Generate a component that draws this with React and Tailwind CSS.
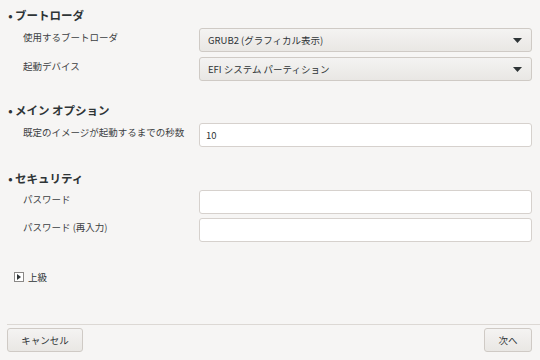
const font = { fontFamily: '"Noto Sans CJK JP", "Noto Sans", sans-serif' };

function Heading({ children, className = '' }) {
  return (
    <div className={'flex items-center h-[20px] pl-[6px] text-[11.5px] font-bold text-[#2e3436] ' + className}>
      <span className="w-[9px] text-center">•</span>
      <span>{children}</span>
    </div>
  );
}

function Row({ label, children }) {
  return (
    <div className="flex h-[24px]">
      <div className="w-[199px] pl-[23px] pt-[2px] text-[9.5px] text-[#3c4042] leading-[14px] whitespace-nowrap shrink-0">{label}</div>
      <div className="flex-1">{children}</div>
    </div>
  );
}

function Combo({ value }) {
  return (
    <div className="h-full flex items-center justify-between pl-[8px] pr-[9px] rounded-[3px] border border-[#cfcac5] bg-gradient-to-b from-[#f4f3f2] to-[#e9e7e4] text-[9.5px] text-[#2e3436]">
      <span>{value}</span>
      <svg width="9" height="5" viewBox="0 0 9 5"><path d="M0 0h9L4.5 5z" fill="#2e3436" /></svg>
    </div>
  );
}

function Entry({ value }) {
  return (
    <div className="h-full flex items-center px-[6px] rounded-[3px] border border-[#d6d1cd] bg-white text-[9.5px] text-[#2e3436]">
      {value}
    </div>
  );
}

export default function App() {
  return (
    <div style={font} className="w-[540px] h-[360px] bg-[#f6f5f4] flex flex-col overflow-hidden">
      <div className="pr-[8px]">
        <Heading className="mt-[6px] mb-[2px]">ブートローダ</Heading>
        <div className="flex flex-col gap-[5px]">
          <Row label="使用するブートローダ"><Combo value="GRUB2 (グラフィカル表示)" /></Row>
          <Row label="起動デバイス"><Combo value="EFI システム パーティション" /></Row>
        </div>

        <Heading className="mt-[20px] mb-[2px]">メイン オプション</Heading>
        <Row label="既定のイメージが起動するまでの秒数"><Entry value="10" /></Row>

        <Heading className="mt-[22px] mb-[1px]">セキュリティ</Heading>
        <div className="flex flex-col gap-[4px]">
          <Row label="パスワード"><Entry value="" /></Row>
          <Row label="パスワード (再入力)"><Entry value="" /></Row>
        </div>

        <div className="flex items-center gap-[4px] mt-[29px] pl-[14px] h-[12px] text-[9.5px] text-[#2e3436]">
          <span className="w-[10px] h-[10px] border border-[#8a8886] bg-white flex items-center justify-center">
            <svg width="4" height="6" viewBox="0 0 4 6"><path d="M0 0v6l4-3z" fill="#2e3436" /></svg>
          </span>
          <span>上級</span>
        </div>
      </div>

      <div className="mt-auto ml-[7px] border-t border-[#dcd8d4] pt-[3px] pb-[8px] pr-[8px] flex justify-between">
        <button className="w-[76px] h-[24px] rounded-[3px] border border-[#cfcac5] bg-gradient-to-b from-[#f4f3f2] to-[#e9e7e4] text-[9.5px] text-[#2e3436]">キャンセル</button>
        <button className="w-[48px] h-[24px] rounded-[3px] border border-[#cfcac5] bg-gradient-to-b from-[#f4f3f2] to-[#e9e7e4] text-[9.5px] text-[#2e3436]">次へ</button>
      </div>
    </div>
  );
}
